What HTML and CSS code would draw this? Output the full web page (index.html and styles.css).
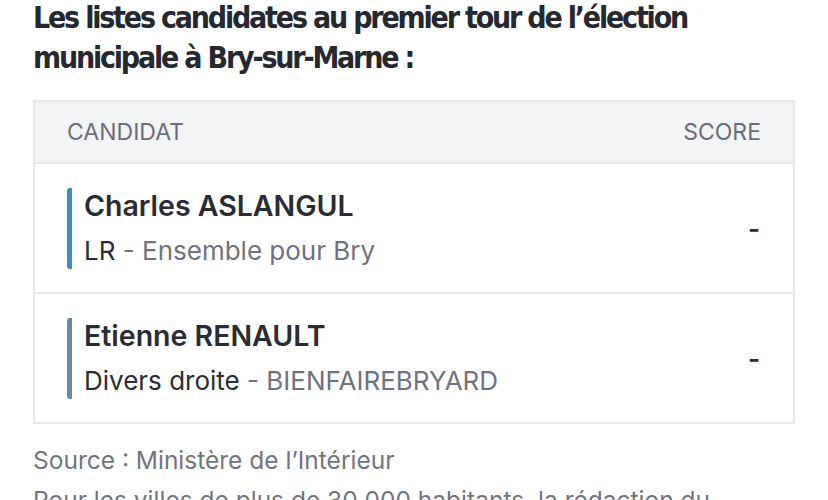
FILE: index.html
```html
<!DOCTYPE html>
<html lang="fr">
<head>
    <meta charset="UTF-8">
    <meta name="viewport" content="width=device-width, initial-scale=1.0">
    <title>Municipales Bry-sur-Marne</title>
    <link rel="stylesheet" href="styles.css">
</head>
<body>

    <div class="article">
        <h2>Les listes candidates au premier tour de l’élection municipale à Bry-sur-Marne :</h2>

        <div class="results">
            <div class="results-head">
                <span>Candidat</span>
                <span>Score</span>
            </div>

            <div class="candidate">
                <div class="candidate-info bar-lr">
                    <div class="name">Charles ASLANGUL</div>
                    <div class="list"><span class="party">LR</span> - Ensemble pour Bry</div>
                </div>
                <div class="score">-</div>
            </div>

            <div class="candidate">
                <div class="candidate-info bar-dvd">
                    <div class="name">Etienne RENAULT</div>
                    <div class="list"><span class="party">Divers droite</span> - BIENFAIREBRYARD</div>
                </div>
                <div class="score">-</div>
            </div>
        </div>

        <p class="source">Source : Ministère de l’Intérieur</p>
        <p class="source">Pour les villes de plus de 30 000 habitants, la rédaction du</p>
    </div>

</body>
</html>
```

FILE: styles.css
```css
body {
    font-family: Inter, "Liberation Sans", sans-serif;
    background-color: white;
    color: #2a2c34;
    margin: 0;
    padding: 0 33px;
}
h2 {
    font-family: "DejaVu Sans", sans-serif;
    font-stretch: condensed;
    font-weight: bold;
    font-size: 30px;
    letter-spacing: -2.2px;
    line-height: 40px;
    color: #262830;
    margin: -2px 0 22px 0;
}
.results {
    border: 2px solid #e7e8eb;
    max-width: 758px;
}
.results-head {
    display: flex;
    justify-content: space-between;
    align-items: center;
    height: 60px;
    padding: 0 32px;
    background: #f3f4f6;
    border-bottom: 2px solid #e7e8eb;
    font-size: 23px;
    text-transform: uppercase;
    color: #6b6e78;
}
.candidate {
    display: flex;
    justify-content: space-between;
    align-items: center;
    height: 128px;
    padding: 0 33px 0 32px;
    border-bottom: 2px solid #e7e8eb;
}
.candidate:last-child {
    border-bottom: none;
}
.candidate-info {
    border-left: 5px solid;
    border-radius: 3px;
    padding-left: 12px;
}
.bar-lr {
    border-color: #3b8dc2;
}
.bar-dvd {
    border-color: #6a87a4;
}
.name {
    font-size: 28.5px;
    font-weight: 600;
    line-height: 36px;
    color: #2a2c34;
}
.list {
    margin-top: 9px;
    font-size: 26px;
    line-height: 36px;
    color: #6f7380;
}
.party {
    color: #2a2c34;
}
.score {
    font-size: 26px;
    font-weight: 600;
    color: #2a2c34;
}
.source {
    margin: 16px 0 0 0;
    font-size: 24.5px;
    line-height: 40px;
    color: #72757f;
}
.source + .source {
    margin-top: 0;
}
```
